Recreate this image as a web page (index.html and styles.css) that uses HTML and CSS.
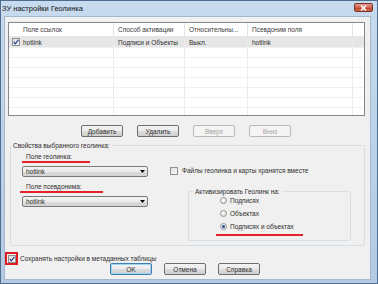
FILE: index.html
```html
<!DOCTYPE html>
<html>
<head>
  <meta charset="utf-8">
  <title>ЗУ настройки Геолинка</title>
  <link rel="stylesheet" href="styles.css">
</head>
<body>
  <!-- Dialog window -->
  <div class="window">
    <div class="titlebar">
      <span class="title">ЗУ настройки Геолинка</span>
      <span class="close">
        <svg width="7" height="6" viewBox="0 0 7 6"><path d="M1 0.5 L6 5.5 M6 0.5 L1 5.5" stroke="#fff" stroke-width="1.6"/></svg>
      </span>
    </div>

    <div class="client">
      <!-- Links list -->
      <div class="list">
        <div class="list-head">
          <div class="col c1 first">Поле ссылок</div>
          <div class="col c2">Способ активации</div>
          <div class="col c3">Относительны...</div>
          <div class="col c4">Псевдоним поля</div>
          <div class="col c5"></div>
        </div>
        <div class="list-row selected">
          <div class="col c1 cell-check">
            <span class="check">
              <svg width="6" height="6" viewBox="0 0 6 6"><path d="M0.8 3 L2.4 4.8 L5.4 0.8" fill="none" stroke="#23408a" stroke-width="1.2"/></svg>
            </span>hotlink
          </div>
          <div class="col c2">Подписи и Объекты</div>
          <div class="col c3">Выкл.</div>
          <div class="col c4">hotlink</div>
          <div class="col c5"></div>
        </div>
        <div class="list-row"><div class="col c1"></div><div class="col c2"></div><div class="col c3"></div><div class="col c4"></div><div class="col c5"></div></div>
        <div class="list-row"><div class="col c1"></div><div class="col c2"></div><div class="col c3"></div><div class="col c4"></div><div class="col c5"></div></div>
        <div class="list-row"><div class="col c1"></div><div class="col c2"></div><div class="col c3"></div><div class="col c4"></div><div class="col c5"></div></div>
        <div class="list-row"><div class="col c1"></div><div class="col c2"></div><div class="col c3"></div><div class="col c4"></div><div class="col c5"></div></div>
        <div class="list-row"><div class="col c1"></div><div class="col c2"></div><div class="col c3"></div><div class="col c4"></div><div class="col c5"></div></div>
        <div class="list-row"><div class="col c1"></div><div class="col c2"></div><div class="col c3"></div><div class="col c4"></div><div class="col c5"></div></div>
        <div class="list-row"><div class="col c1"></div><div class="col c2"></div><div class="col c3"></div><div class="col c4"></div><div class="col c5"></div></div>
      </div>

      <div class="list-buttons">
        <span class="btn">Добавить</span>
        <span class="btn">Удалить</span>
        <span class="btn disabled">Вверх</span>
        <span class="btn disabled">Вниз</span>
      </div>

      <!-- Selected geolink properties -->
      <fieldset class="group">
        <legend>Свойства выбранного геолинка:</legend>
        <div class="group-body">
          <div class="col-left">
            <div class="field-label">Поле геолинка:</div>
            <div class="redline line-geo"></div>
            <div class="combo"><span>hotlink</span><svg width="5" height="3" viewBox="0 0 5 3"><path d="M0 0 H5 L2.5 3 Z" fill="#000"/></svg></div>
            <div class="field-label second">Поле псевдонима:</div>
            <div class="redline line-alias"></div>
            <div class="combo"><span>hotlink</span><svg width="5" height="3" viewBox="0 0 5 3"><path d="M0 0 H5 L2.5 3 Z" fill="#000"/></svg></div>
          </div>
          <div class="col-right">
            <div class="check-row">
              <span class="check"></span>Файлы геолинка и карты хранятся вместе
            </div>
            <fieldset class="subgroup">
              <legend>Активизировать Геолинк на:</legend>
              <div class="radio-row"><span class="radio"></span>Подписях</div>
              <div class="radio-row"><span class="radio"></span>Объектах</div>
              <div class="radio-row"><span class="radio checked"></span>Подписях и объектах</div>
              <div class="redline line-radio"></div>
            </fieldset>
          </div>
        </div>
      </fieldset>

      <div class="save-row">
        <span class="red-box">
          <span class="check">
            <svg width="6" height="6" viewBox="0 0 6 6"><path d="M0.8 3 L2.4 4.8 L5.4 0.8" fill="none" stroke="#23408a" stroke-width="1.2"/></svg>
          </span>
        </span>
        <span>Сохранять настройки в метаданных таблицы</span>
      </div>

      <div class="dialog-buttons">
        <span class="btn default">OK</span>
        <span class="btn">Отмена</span>
        <span class="btn">Справка</span>
      </div>
    </div>
  </div>
</body>
</html>
```

FILE: styles.css
```css
body {
  margin: 0;
  font-family: "Liberation Sans", Arial, sans-serif;
  font-size: 6.5px;
  color: #2e2e2e;
  background: #fff;
}
.window {
  width: 378px;
  height: 284px;
  box-sizing: border-box;
  border: 1px solid #4f6e8f;
  background: linear-gradient(#c7daee, #b3cae3);
  display: flex;
  flex-direction: column;
}
.titlebar {
  height: 16px;
  display: flex;
  justify-content: space-between;
  align-items: flex-start;
  padding: 0 4px 0 1px;
}
.title {
  font-size: 7.5px;
  line-height: 9px;
  margin-top: 3px;
  color: #111;
}
.close {
  width: 19px;
  height: 9px;
  margin-top: 2px;
  box-sizing: border-box;
  border: 1px solid #7a3328;
  border-radius: 2px;
  background: linear-gradient(#e39c8e, #d0634e 50%, #c0412b 51%, #cf6a4b);
  display: flex;
  align-items: center;
  justify-content: center;
}
.client {
  flex: 1;
  margin: 0 7px 4px 4px;
  padding: 5px 0 0 3px;
  background: #f0f0f0;
  box-shadow: 0 0 0 1px #a3b9d0;
}

/* List view */
.list {
  width: 357px;
  height: 94px;
  box-sizing: border-box;
  border: 1px solid #828790;
  background: #fff;
  overflow: hidden;
}
.list-head,
.list-row {
  display: flex;
  box-sizing: border-box;
}
.list-head {
  height: 14px;
  border-bottom: 1px solid #e5e5e5;
  color: #3a3a3a;
}
.list-row {
  height: 10px;
  border-bottom: 1px solid #f0f0f0;
}
.list-row.selected {
  height: 11px;
  background: #e6e6e6;
}
.col {
  box-sizing: border-box;
  border-right: 1px solid #ebebeb;
  padding-left: 4px;
  white-space: nowrap;
  overflow: hidden;
  display: flex;
  align-items: center;
}
.list-head .col {
  border-right-color: #e3e3e3;
}
.c1 { width: 105px; }
.c2 { width: 71px; }
.c3 { width: 63px; }
.c4 { width: 105px; }
.c5 { flex: 1; border-right: none; }
.c1.first { padding-left: 14px; }
.cell-check { padding-left: 3px; }
.cell-check .check { margin-right: 3px; }

.check {
  width: 8px;
  height: 8px;
  box-sizing: border-box;
  border: 1px solid #8e8f8f;
  background: linear-gradient(135deg, #dcdcdc, #fbfbfb);
  display: inline-flex;
  align-items: center;
  justify-content: center;
  flex-shrink: 0;
}

/* Buttons */
.list-buttons {
  display: flex;
  gap: 14px;
  margin: 9px 0 0 73px;
}
.btn {
  width: 42px;
  height: 12px;
  box-sizing: border-box;
  border: 1px solid #707070;
  border-radius: 2px;
  background: linear-gradient(#f3f3f3, #ebebeb 50%, #dddddd 51%, #cfcfcf);
  display: flex;
  align-items: center;
  justify-content: center;
  color: #2e2e2e;
}
.btn.disabled {
  border-color: #b5b9bc;
  background: #f4f4f4;
  color: #a3a3a3;
}
.btn.default {
  border-color: #3c7fb1;
  box-shadow: inset 0 0 0 1px #9fd5f3;
}

/* Group boxes */
fieldset {
  margin: 0;
  min-inline-size: auto;
  box-sizing: border-box;
  border: 1px solid #d5dfe5;
  border-radius: 2px;
}
legend {
  padding: 0 2px;
  line-height: 9px;
}
.group {
  width: 355px;
  margin: 4px 0 0 2px;
  padding: 2px 0 4px 11px;
}
.group > legend {
  margin-left: -11px;
}
.group-body {
  display: flex;
  gap: 22px;
}
.col-left {
  width: 126px;
}
.field-label {
  line-height: 9px;
  padding-left: 4px;
}
.field-label.second {
  margin-top: 5px;
}
.redline {
  height: 2px;
  background: #e2232a;
}
.line-geo { width: 68px; }
.line-alias { width: 83px; margin-left: -2px; }
.combo {
  height: 11px;
  margin-top: 3px;
  box-sizing: border-box;
  border: 1px solid #7a7a7a;
  border-radius: 2px;
  background: linear-gradient(#f3f3f3, #ebebeb 50%, #dddddd 51%, #d2d2d2);
  display: flex;
  align-items: center;
  justify-content: space-between;
  padding: 0 2px 0 3px;
}
.check-row {
  display: flex;
  align-items: center;
  gap: 4px;
  line-height: 9px;
  margin-top: 14px;
}
.subgroup {
  width: 163px;
  margin: 12px 0 0 18px;
  padding: 0 0 4px 31px;
}
.subgroup > legend {
  margin-left: -27px;
}
.radio-row {
  display: flex;
  align-items: center;
  gap: 3px;
  line-height: 9px;
  margin-top: 4px;
}
.radio-row:first-of-type {
  margin-top: 0;
}
.radio {
  width: 7px;
  height: 7px;
  box-sizing: border-box;
  border-radius: 50%;
  border: 1px solid #939393;
  background: radial-gradient(circle at 40% 40%, #ffffff, #d4d4d4);
  display: inline-flex;
  align-items: center;
  justify-content: center;
}
.radio.checked::after {
  content: "";
  width: 3px;
  height: 3px;
  border-radius: 50%;
  background: #1d4b8c;
}
.line-radio {
  width: 87px;
  margin: 3px 0 0 -4px;
}

/* Footer */
.save-row {
  display: flex;
  align-items: center;
  gap: 2px;
  height: 13px;
  margin: 6px 0 0 -3px;
}
.red-box {
  width: 13px;
  height: 13px;
  box-sizing: border-box;
  border: 2px solid #e01b22;
  display: flex;
  align-items: center;
  justify-content: center;
}
.dialog-buttons {
  display: flex;
  gap: 12px;
  margin: -2px 0 0 102px;
}
```
